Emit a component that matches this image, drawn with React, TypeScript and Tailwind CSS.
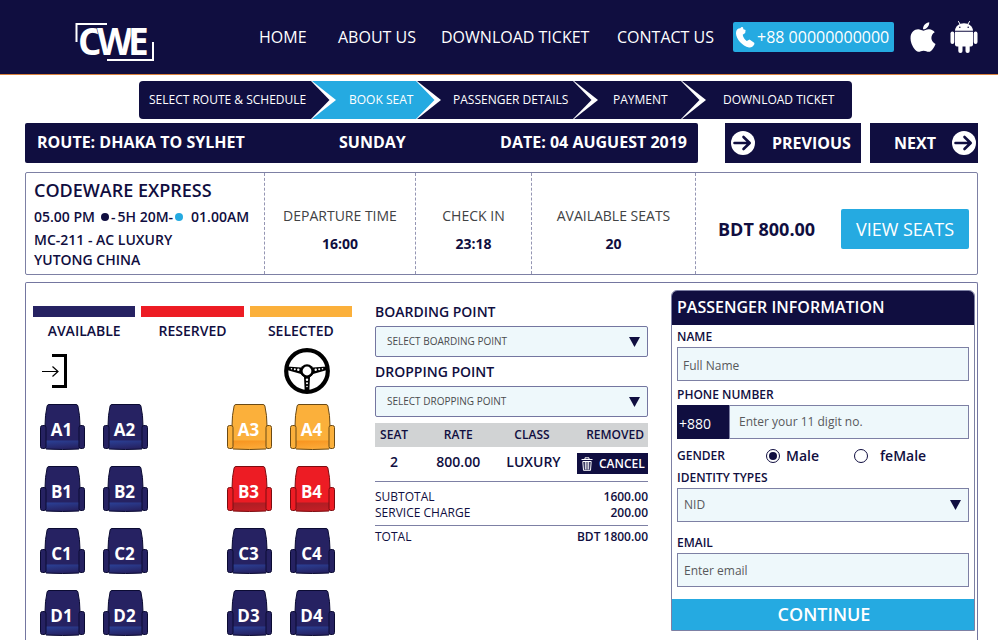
import { useState } from 'react';
import { FaApple } from 'react-icons/fa';

type SeatStatus = 'available' | 'reserved' | 'selected';

const NAV = [
  { label: 'HOME', className: 'w-[79px]' },
  { label: 'ABOUT US', className: 'w-[103px]' },
  { label: 'DOWNLOAD TICKET', className: 'w-[176px]' },
  { label: 'CONTACT US', className: 'w-[116px]' },
];

const STEPS = [
  { label: 'SELECT ROUTE & SCHEDULE', className: 'w-[172px] pl-[10px] rounded-l-sm' },
  { label: 'BOOK SEAT', className: 'w-[79px] pl-[12px]' },
  { label: 'PASSENGER DETAILS', className: 'w-[131px] pl-[11px]' },
  { label: 'PAYMENT', className: 'w-[82px] pl-[14px]' },
  { label: 'DOWNLOAD TICKET', className: 'w-[145px] pl-[16px] rounded-r-sm' },
];

const ACTIVE_STEP = 1;

const LEGEND = [
  { label: 'AVAILABLE', className: 'bg-[#262262]' },
  { label: 'RESERVED', className: 'bg-[#ed1c24]' },
  { label: 'SELECTED', className: 'bg-[#fbb03b]' },
];

const SEAT_COLORS: Record<SeatStatus, { fill: string; line: string; from: string; to: string }> = {
  available: { fill: '#262262', line: '#0b0b33', from: '#2b4197', to: '#262262' },
  reserved: { fill: '#ed1c24', line: '#7d0c10', from: '#a91e24', to: '#c41e25' },
  selected: { fill: '#fbb03b', line: '#6b4a15', from: '#f7931e', to: '#fbaa38' },
};

const SEAT_ROWS = ['A', 'B', 'C', 'D'];

const STATUS: Record<string, SeatStatus> = {
  A3: 'selected',
  A4: 'selected',
  B3: 'reserved',
  B4: 'reserved',
};

function Logo() {
  return (
    <svg width="80" height="42" viewBox="0 0 80 42" role="img" aria-label="CWE" className="overflow-visible">
      <path d="M1.500 21V3H32M32 39h46V21" fill="none" stroke="#fff" strokeWidth="2" />
      <g
        fill="#fff"
        stroke="#100e40"
        strokeWidth="1"
        paintOrder="stroke"
        fontFamily="Open Sans, sans-serif"
        fontSize="37"
        fontWeight="700"
      >
        <text x="3" y="34">C</text>
        <text x="22" y="34">W</text>
        <text x="53" y="34">E</text>
      </g>
    </svg>
  );
}

function PhoneIcon() {
  return (
    <svg width="20" height="23" viewBox="0 0 20 23" fill="#fff" aria-hidden="true">
      <path d="M5.200 2.200 6.500.900 8 1.200l.4 2.100 2.200.7-.4 3-2.500 1.700c.4 2.500 1.900 4.700 4.100 6.300l2.700-1.500 4.700 3.300c.4.500.3 1.100 0 1.700-1.200 2-3 3.300-5.200 2.900C7.200 20.200 1.200 12.800 1 7.500 1 5.200 1.800 3.200 3.600 2.600z" />
    </svg>
  );
}

function AndroidIcon() {
  return (
    <svg width="28" height="32" viewBox="0 0 28 32" fill="#fff" role="img" aria-label="Android">
      <path d="M8.500.500 10.500 4M19.500.500 17.500 4" stroke="#fff" strokeLinecap="round" />
      <path d="M5 9.800C5 5.600 9 2.200 14 2.200s9 3.400 9 7.600z" />
      <circle cx="9.800" cy="6.300" r="0.800" fill="#100e40" />
      <circle cx="18.200" cy="6.300" r="0.800" fill="#100e40" />
      <path d="M5 10.800h18v12.700q0 2-2 2H7q-2 0-2-2z" />
      <rect x="0.500" y="10.500" width="3.800" height="12.500" rx="1.900" />
      <rect x="23.700" y="10.500" width="3.800" height="12.500" rx="1.900" />
      <rect x="8.300" y="22" width="4.200" height="10" rx="2" />
      <rect x="15.500" y="22" width="4.200" height="10" rx="2" />
    </svg>
  );
}

function ArrowCircle() {
  return (
    <svg width="24" height="24" viewBox="0 0 24 24" aria-hidden="true">
      <circle cx="12" cy="12" r="12" fill="#fff" />
      <path
        d="M3.500 12h15M12.500 6l6.200 6-6.200 6"
        fill="none"
        stroke="#100e40"
        strokeWidth="2.600"
        strokeLinecap="round"
        strokeLinejoin="round"
      />
    </svg>
  );
}

function StepDivider({ left, right }: { left: string; right: string }) {
  return (
    <svg width="26" height="38" viewBox="0 0 26 38" className="shrink-0" aria-hidden="true">
      <path d="M0 0h26v38H0z" fill={right} />
      <path d="M0 0h1l24 19L1 38H0z" fill="#fff" />
      <path d="M0 0l18.500 19L0 38z" fill={left} />
    </svg>
  );
}

function Seat({ id, status }: { id: string; status: SeatStatus }) {
  const c = SEAT_COLORS[status];
  const gradient = `cushion-${id}`;
  return (
    <button type="button" aria-label={`Seat ${id}, ${status}`} className="relative block h-[47px] w-[46px]">
      <svg width="46" height="47" viewBox="0 0 46 47" aria-hidden="true">
        <defs>
          <linearGradient id={gradient} x1="0" y1="0" x2="0.300" y2="1">
            <stop offset="0" stopColor={c.from} />
            <stop offset="1" stopColor={c.to} />
          </linearGradient>
        </defs>
        <g fill={c.fill} stroke={c.line} strokeWidth="1">
          <path d="M9 1.500h27q1.500 0 1.900 1.500 2.100 9 2.100 20v22H5V23Q5 12 7.100 3 7.500 1.500 9 1.500z" />
          <path d="M6 37.500h33V46q-16.500 1-33 0z" fill={`url(#${gradient})`} stroke="none" />
          <path d="M6 46q16.500 1 33 0" fill="none" />
          <rect x="0.500" y="22.500" width="5.500" height="23" rx="2" />
          <rect x="39" y="22.500" width="5.500" height="23" rx="2" />
        </g>
      </svg>
      <span className="absolute inset-x-0 top-[15px] pr-[3px] text-center text-[17px] leading-6 font-bold text-white">
        {id}
      </span>
    </button>
  );
}

function DoorIcon() {
  return (
    <svg width="26" height="36" viewBox="0 0 26 36" fill="none" stroke="#000" role="img" aria-label="Door">
      <path d="M10 2.500h13.500v31H10" strokeWidth="3" />
      <path d="M0 18.500h16M10.500 13.500l5.500 5-5.500 5" strokeWidth="1.200" />
    </svg>
  );
}

function SteeringWheel() {
  return (
    <svg width="46" height="46" viewBox="0 0 46 46" role="img" aria-label="Driver">
      <circle cx="23" cy="23" r="20.800" fill="none" stroke="#000" strokeWidth="4.200" />
      <path d="M3 18.500 17 19.500h12l14-1v3.500L29 26l-3 3-.7 14h-4.600L20 29l-3-3-14-4z" />
      <circle cx="23" cy="23" r="6.800" />
      <circle cx="23" cy="23" r="4.400" fill="#fff" />
      <g fill="#fff">
        <circle cx="7.500" cy="20.800" r="0.800" />
        <circle cx="10.800" cy="21.200" r="1" />
        <circle cx="14.300" cy="21.800" r="1.200" />
        <circle cx="38.500" cy="20.800" r="0.800" />
        <circle cx="35.200" cy="21.200" r="1" />
        <circle cx="31.700" cy="21.800" r="1.200" />
        <circle cx="23" cy="31.800" r="1.200" />
        <circle cx="23" cy="35.300" r="1" />
        <circle cx="23" cy="38.500" r="0.800" />
      </g>
    </svg>
  );
}

function TrashIcon() {
  return (
    <svg width="12" height="14" viewBox="0 0 12 14" fill="none" stroke="#fff" aria-hidden="true">
      <path d="M.5 2.500h11M4 2.500V.800h4v1.700M1.800 4.500l.7 8.800h7l.7-8.800zM4.300 5v7.500M6 5v7.500M7.700 5v7.500" />
    </svg>
  );
}

function Caret() {
  return (
    <svg
      width="11"
      height="10"
      viewBox="0 0 11 10"
      className="pointer-events-none absolute top-1/2 right-2 -translate-y-1/2"
      aria-hidden="true"
    >
      <path d="M0 0h11L5.500 10z" fill="#100e40" />
    </svg>
  );
}

function PointSelect({ id, label, placeholder }: { id: string; label: string; placeholder: string }) {
  return (
    <div>
      <label htmlFor={id} className="block text-[14px] leading-5 font-semibold">
        {label}
      </label>
      <div className="relative mt-1">
        <select
          id={id}
          className="block h-[31px] w-full appearance-none rounded-xs border border-[#7476a0] bg-[#eef8fb] pl-[11px] text-[10px] font-medium text-[#4a4b4d]"
        >
          <option>{placeholder}</option>
        </select>
        <Caret />
      </div>
    </div>
  );
}

const FIELD =
  'block h-[34px] w-full border border-[#7d80a4] bg-[#eef8fb] text-[12px] font-medium text-[#58595b] placeholder:text-[#58595b]';

const FIELD_LABEL = 'block text-[12px] leading-4 font-semibold';

function PassengerForm() {
  const [gender, setGender] = useState('Male');

  return (
    <form className="self-start overflow-hidden rounded-t-md border border-[#7d80a4]">
      <h2 className="flex h-[34px] items-center bg-[#100e40] pb-[2px] pl-[5px] text-[16px] font-semibold text-white">
        PASSENGER INFORMATION
      </h2>
      <div className="px-[5px] pt-1">
        <label htmlFor="name" className={FIELD_LABEL}>
          NAME
        </label>
        <input id="name" placeholder="Full Name" className={`${FIELD} mt-[2px] pt-[2px] pl-[5px]`} />

        <label htmlFor="phone" className={`${FIELD_LABEL} mt-[6px]`}>
          PHONE NUMBER
        </label>
        <div className="mt-[2px] flex">
          <span className="flex w-[52px] shrink-0 items-center bg-[#100e40] pt-[2px] pl-[2px] text-[14px] font-medium text-white">
            +880
          </span>
          <input id="phone" type="tel" placeholder="Enter your 11 digit no." className={`${FIELD} min-w-0 pb-[2px] pl-[9px]`} />
        </div>

        <fieldset className="mt-[9px] flex h-4 items-center">
          <legend className="float-left w-[89px] text-[12px] leading-4 font-semibold">GENDER</legend>
          {['Male', 'feMale'].map((g) => (
            <label key={g} className="flex w-[88px] items-center gap-[6px] text-[14px] leading-4 font-semibold last:gap-3">
              <input
                type="radio"
                name="gender"
                checked={gender === g}
                onChange={() => setGender(g)}
                className="size-[14px] shrink-0 appearance-none rounded-full border border-[#100e40] bg-white p-[2px] bg-clip-content checked:bg-[#100e40]"
              />
              {g}
            </label>
          ))}
        </fieldset>

        <label htmlFor="identity" className={`${FIELD_LABEL} mt-[6px]`}>
          IDENTITY TYPES
        </label>
        <div className="relative mt-[2px]">
          <select id="identity" className={`${FIELD} appearance-none pl-[6px]`}>
            <option>NID</option>
          </select>
          <Caret />
        </div>

        <label htmlFor="email" className={`${FIELD_LABEL} mt-[13px]`}>
          EMAIL
        </label>
        <input id="email" type="email" placeholder="Enter email" className={`${FIELD} mt-[2px] pl-[6px]`} />
      </div>
      <button
        type="button"
        className="mt-3 block h-[31px] w-full bg-[#25aae1] pb-[2px] pl-[2px] text-[18px] leading-5 font-semibold text-white"
      >
        CONTINUE
      </button>
    </form>
  );
}

function Booking() {
  return (
    <section className="pt-[19px]">
      <PointSelect id="boarding" label="BOARDING POINT" placeholder="SELECT BOARDING POINT" />
      <div className="mt-[5px]">
        <PointSelect id="dropping" label="DROPPING POINT" placeholder="SELECT DROPPING POINT" />
      </div>

      <table className="mt-[6px] w-full table-fixed border-b border-[#7d80a4]">
        <thead>
          <tr className="h-6 bg-[#d1d3d4] text-[12px] leading-4 [&>th]:font-semibold">
            <th className="w-[14%]">SEAT</th>
            <th className="w-[33%]">RATE</th>
            <th className="w-[21%]">CLASS</th>
            <th className="pr-1 text-right">REMOVED</th>
          </tr>
        </thead>
        <tbody>
          <tr className="h-[34px] text-center text-[14px] leading-5 font-semibold">
            <td className="pb-1">2</td>
            <td className="pb-1">800.00</td>
            <td className="pb-1 pl-[3px]">LUXURY</td>
            <td>
              <button
                type="button"
                className="ml-auto flex h-[21px] w-[71px] items-center gap-[6px] bg-[#100e40] pl-1 text-[12px] text-white"
              >
                <TrashIcon />
                CANCEL
              </button>
            </td>
          </tr>
        </tbody>
      </table>

      <dl className="text-[12px] leading-4">
        <div className="mt-[7px] flex justify-between">
          <dt>SUBTOTAL</dt>
          <dd className="font-semibold">1600.00</dd>
        </div>
        <div className="flex justify-between">
          <dt>SERVICE CHARGE</dt>
          <dd className="font-semibold">200.00</dd>
        </div>
        <div className="mt-1 flex justify-between border-t border-[#7d80a4] pt-[3px]">
          <dt>TOTAL</dt>
          <dd className="font-semibold">BDT 1800.00</dd>
        </div>
      </dl>
    </section>
  );
}

function SeatPlan() {
  return (
    <section className="pt-[23px]">
      <ul className="grid grid-cols-3 gap-[6px]">
        {LEGEND.map((l) => (
          <li key={l.label} className="text-center text-[14px] leading-5 font-semibold">
            <div className={`mb-1 h-[11px] ${l.className}`} />
            {l.label}
          </li>
        ))}
      </ul>
      <div className="mt-[7px] flex items-center justify-between pr-[22px] pl-[9px]">
        <DoorIcon />
        <SteeringWheel />
      </div>
      <div className="mt-[9px] space-y-[15px] pr-4 pl-[7px]">
        {SEAT_ROWS.map((row) => (
          <div key={row} className="flex justify-between">
            {[[1, 2], [3, 4]].map((pair) => (
              <div key={pair[0]} className="flex gap-[17px]">
                {pair.map((n) => (
                  <Seat key={n} id={`${row}${n}`} status={STATUS[`${row}${n}`] ?? 'available'} />
                ))}
              </div>
            ))}
          </div>
        ))}
      </div>
    </section>
  );
}

function TripFact({ label, value }: { label: string; value: string }) {
  return (
    <div className="border-r border-dashed border-[#9495b3] pt-[33px] text-center">
      <p className="text-[14px] leading-5 font-medium text-[#414244]">{label}</p>
      <p className="mt-2 text-[14px] leading-5 font-bold">{value}</p>
    </div>
  );
}

export default function App() {
  return (
    <div className="flex min-h-screen flex-col bg-white font-['Open_Sans',sans-serif] text-[#100e40]">
      <header className="flex h-[75px] items-center justify-between border-b border-[#d9813c] bg-[#100e40] pr-5 pl-[75px] text-white">
        <div className="pt-[10px]">
          <Logo />
        </div>
        <div className="flex items-center">
          <nav className="flex text-[16px] font-medium whitespace-nowrap">
            {NAV.map((n) => (
              <a key={n.label} href="#" className={n.className}>
                {n.label}
              </a>
            ))}
          </nav>
          <a
            href="tel:+8800000000000"
            className="flex h-[30px] w-[161px] items-center gap-[2px] rounded-xs bg-[#25aae1] pl-[2px] text-[16px] font-medium whitespace-nowrap"
          >
            <PhoneIcon />
            +88 00000000000
          </a>
          <a href="#" aria-label="iOS app" className="ml-3">
            <FaApple size={34} />
          </a>
          <a href="#" aria-label="Android app" className="ml-[10px]">
            <AndroidIcon />
          </a>
        </div>
      </header>

      <main className="flex flex-1 flex-col pr-5 pl-[25px]">
        <nav className="mt-[6px] flex justify-center pr-3">
          {STEPS.map((s, i) => (
            <div key={s.label} className="flex">
              {i > 0 && (
                <StepDivider
                  left={i - 1 === ACTIVE_STEP ? '#25aae1' : '#100e40'}
                  right={i === ACTIVE_STEP ? '#25aae1' : '#100e40'}
                />
              )}
              <button
                type="button"
                className={`h-[38px] text-left text-[12px] font-medium whitespace-nowrap text-white ${s.className} ${
                  i === ACTIVE_STEP ? 'bg-[#25aae1]' : 'bg-[#100e40]'
                }`}
              >
                {s.label}
              </button>
            </div>
          ))}
        </nav>

        <div className="mt-1 flex h-10 text-[16px] font-bold text-white">
          <div className="flex flex-1 items-center justify-between rounded-xs bg-[#100e40] pr-[11px] pb-[2px] pl-3">
            <span>ROUTE: DHAKA TO SYLHET</span>
            <span>SUNDAY</span>
            <span>DATE: 04 AUGUEST 2019</span>
          </div>
          <button type="button" className="ml-[27px] flex w-[136px] items-center gap-[17px] bg-[#100e40] pb-px pl-[6px]">
            <ArrowCircle />
            PREVIOUS
          </button>
          <button type="button" className="ml-[9px] flex w-[108px] items-center justify-end gap-4 bg-[#100e40] pr-[2px] pb-px">
            NEXT
            <ArrowCircle />
          </button>
        </div>

        <section className="mt-[9px] grid h-[103px] grid-cols-[239fr_151fr_116fr_164fr_281fr] rounded-xs border border-[#7d80a4]">
          <div className="border-r border-dashed border-[#9495b3] pt-[5px] pl-2 text-[14px] font-semibold whitespace-nowrap">
            <h1 className="text-[18px] leading-6">CODEWARE EXPRESS</h1>
            <p className="mt-[5px] flex items-center leading-5">
              05.00 PM
              <span className="ml-[6px] size-2 rounded-full bg-[#100e40]" />
              <span className="mx-[2px]">-</span>
              5H 20M-
              <span className="ml-[2px] size-2 rounded-full bg-[#25aae1]" />
              <span className="ml-2">01.00AM</span>
            </p>
            <p className="mt-[3px] leading-5">MC-211 - AC LUXURY</p>
            <p className="leading-5">YUTONG CHINA</p>
          </div>
          <TripFact label="DEPARTURE TIME" value="16:00" />
          <TripFact label="CHECK IN" value="23:18" />
          <TripFact label="AVAILABLE SEATS" value="20" />
          <div className="flex items-center justify-between pt-[11px] pr-2 pl-[22px]">
            <p className="text-[18px] font-bold">BDT 800.00</p>
            <button
              type="button"
              className="h-10 w-[128px] rounded-xs bg-[#25aae1] text-[18px] font-medium text-white"
            >
              VIEW SEATS
            </button>
          </div>
        </section>

        <div className="mt-[7px] grid flex-1 grid-cols-[319fr_273fr_304fr] gap-x-[23px] rounded-t-xs border border-b-0 border-[#7476a0] pr-[2px] pl-[7px] [&>form]:mt-[7px]">
          <SeatPlan />
          <Booking />
          <PassengerForm />
        </div>
      </main>
    </div>
  );
}
